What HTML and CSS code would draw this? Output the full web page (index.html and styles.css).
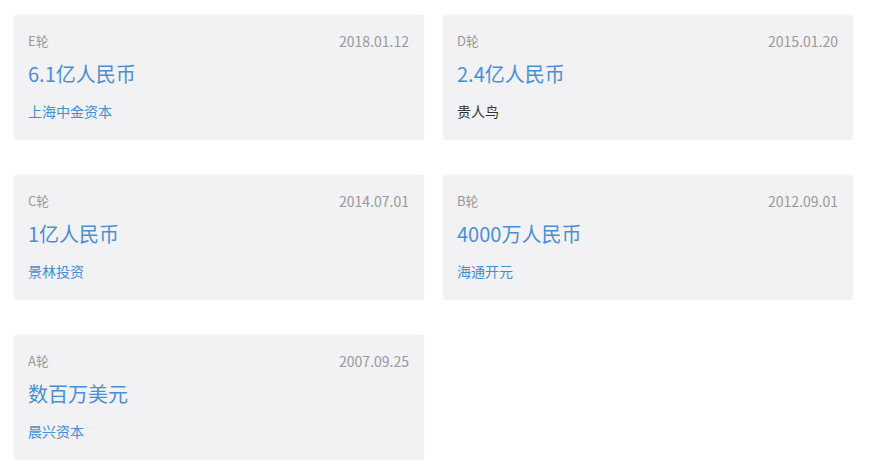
FILE: index.html
```html
<!DOCTYPE html>
<html lang="zh-CN">
<head>
<meta charset="utf-8">
<link rel="stylesheet" href="styles.css">
</head>
<body>
<div class="grid">
  <div class="card">
    <div class="top"><span class="round">E轮</span><span class="date">2018.01.12</span></div>
    <div class="amount">6.1亿人民币</div>
    <div class="investor link">上海中金资本</div>
  </div>
  <div class="card">
    <div class="top"><span class="round">D轮</span><span class="date">2015.01.20</span></div>
    <div class="amount">2.4亿人民币</div>
    <div class="investor">贵人鸟</div>
  </div>
  <div class="card">
    <div class="top"><span class="round">C轮</span><span class="date">2014.07.01</span></div>
    <div class="amount">1亿人民币</div>
    <div class="investor link">景林投资</div>
  </div>
  <div class="card">
    <div class="top"><span class="round">B轮</span><span class="date">2012.09.01</span></div>
    <div class="amount">4000万人民币</div>
    <div class="investor link">海通开元</div>
  </div>
  <div class="card">
    <div class="top"><span class="round">A轮</span><span class="date">2007.09.25</span></div>
    <div class="amount">数百万美元</div>
    <div class="investor link">晨兴资本</div>
  </div>
</div>
</body>
</html>
```
FILE: styles.css
```css
html, body {
  margin: 0;
  background: #ffffff;
}
body {
  font-family: "Noto Sans CJK SC", "Noto Sans", sans-serif;
  padding: 15px 0 0 14px;
}
.grid {
  display: grid;
  grid-template-columns: 410px 410px;
  column-gap: 19px;
  row-gap: 35px;
}
.card {
  height: 125px;
  box-sizing: border-box;
  background: #f2f2f5;
  border-radius: 2px;
  box-shadow: 0 0 2px rgba(0,0,0,0.04);
  padding: 17px 15px 0 14px;
}
.top {
  display: flex;
  justify-content: space-between;
  font-size: 13px;
  line-height: 18px;
  color: #999999;
}
.date {
  font-size: 14px;
}
.amount {
  margin-top: 10px;
  font-size: 20px;
  line-height: 28px;
  color: #4a8fd6;
}
.investor {
  margin-top: 14px;
  font-size: 14px;
  line-height: 19px;
  color: #333333;
}
.investor.link {
  color: #3f8fd2;
}
```
